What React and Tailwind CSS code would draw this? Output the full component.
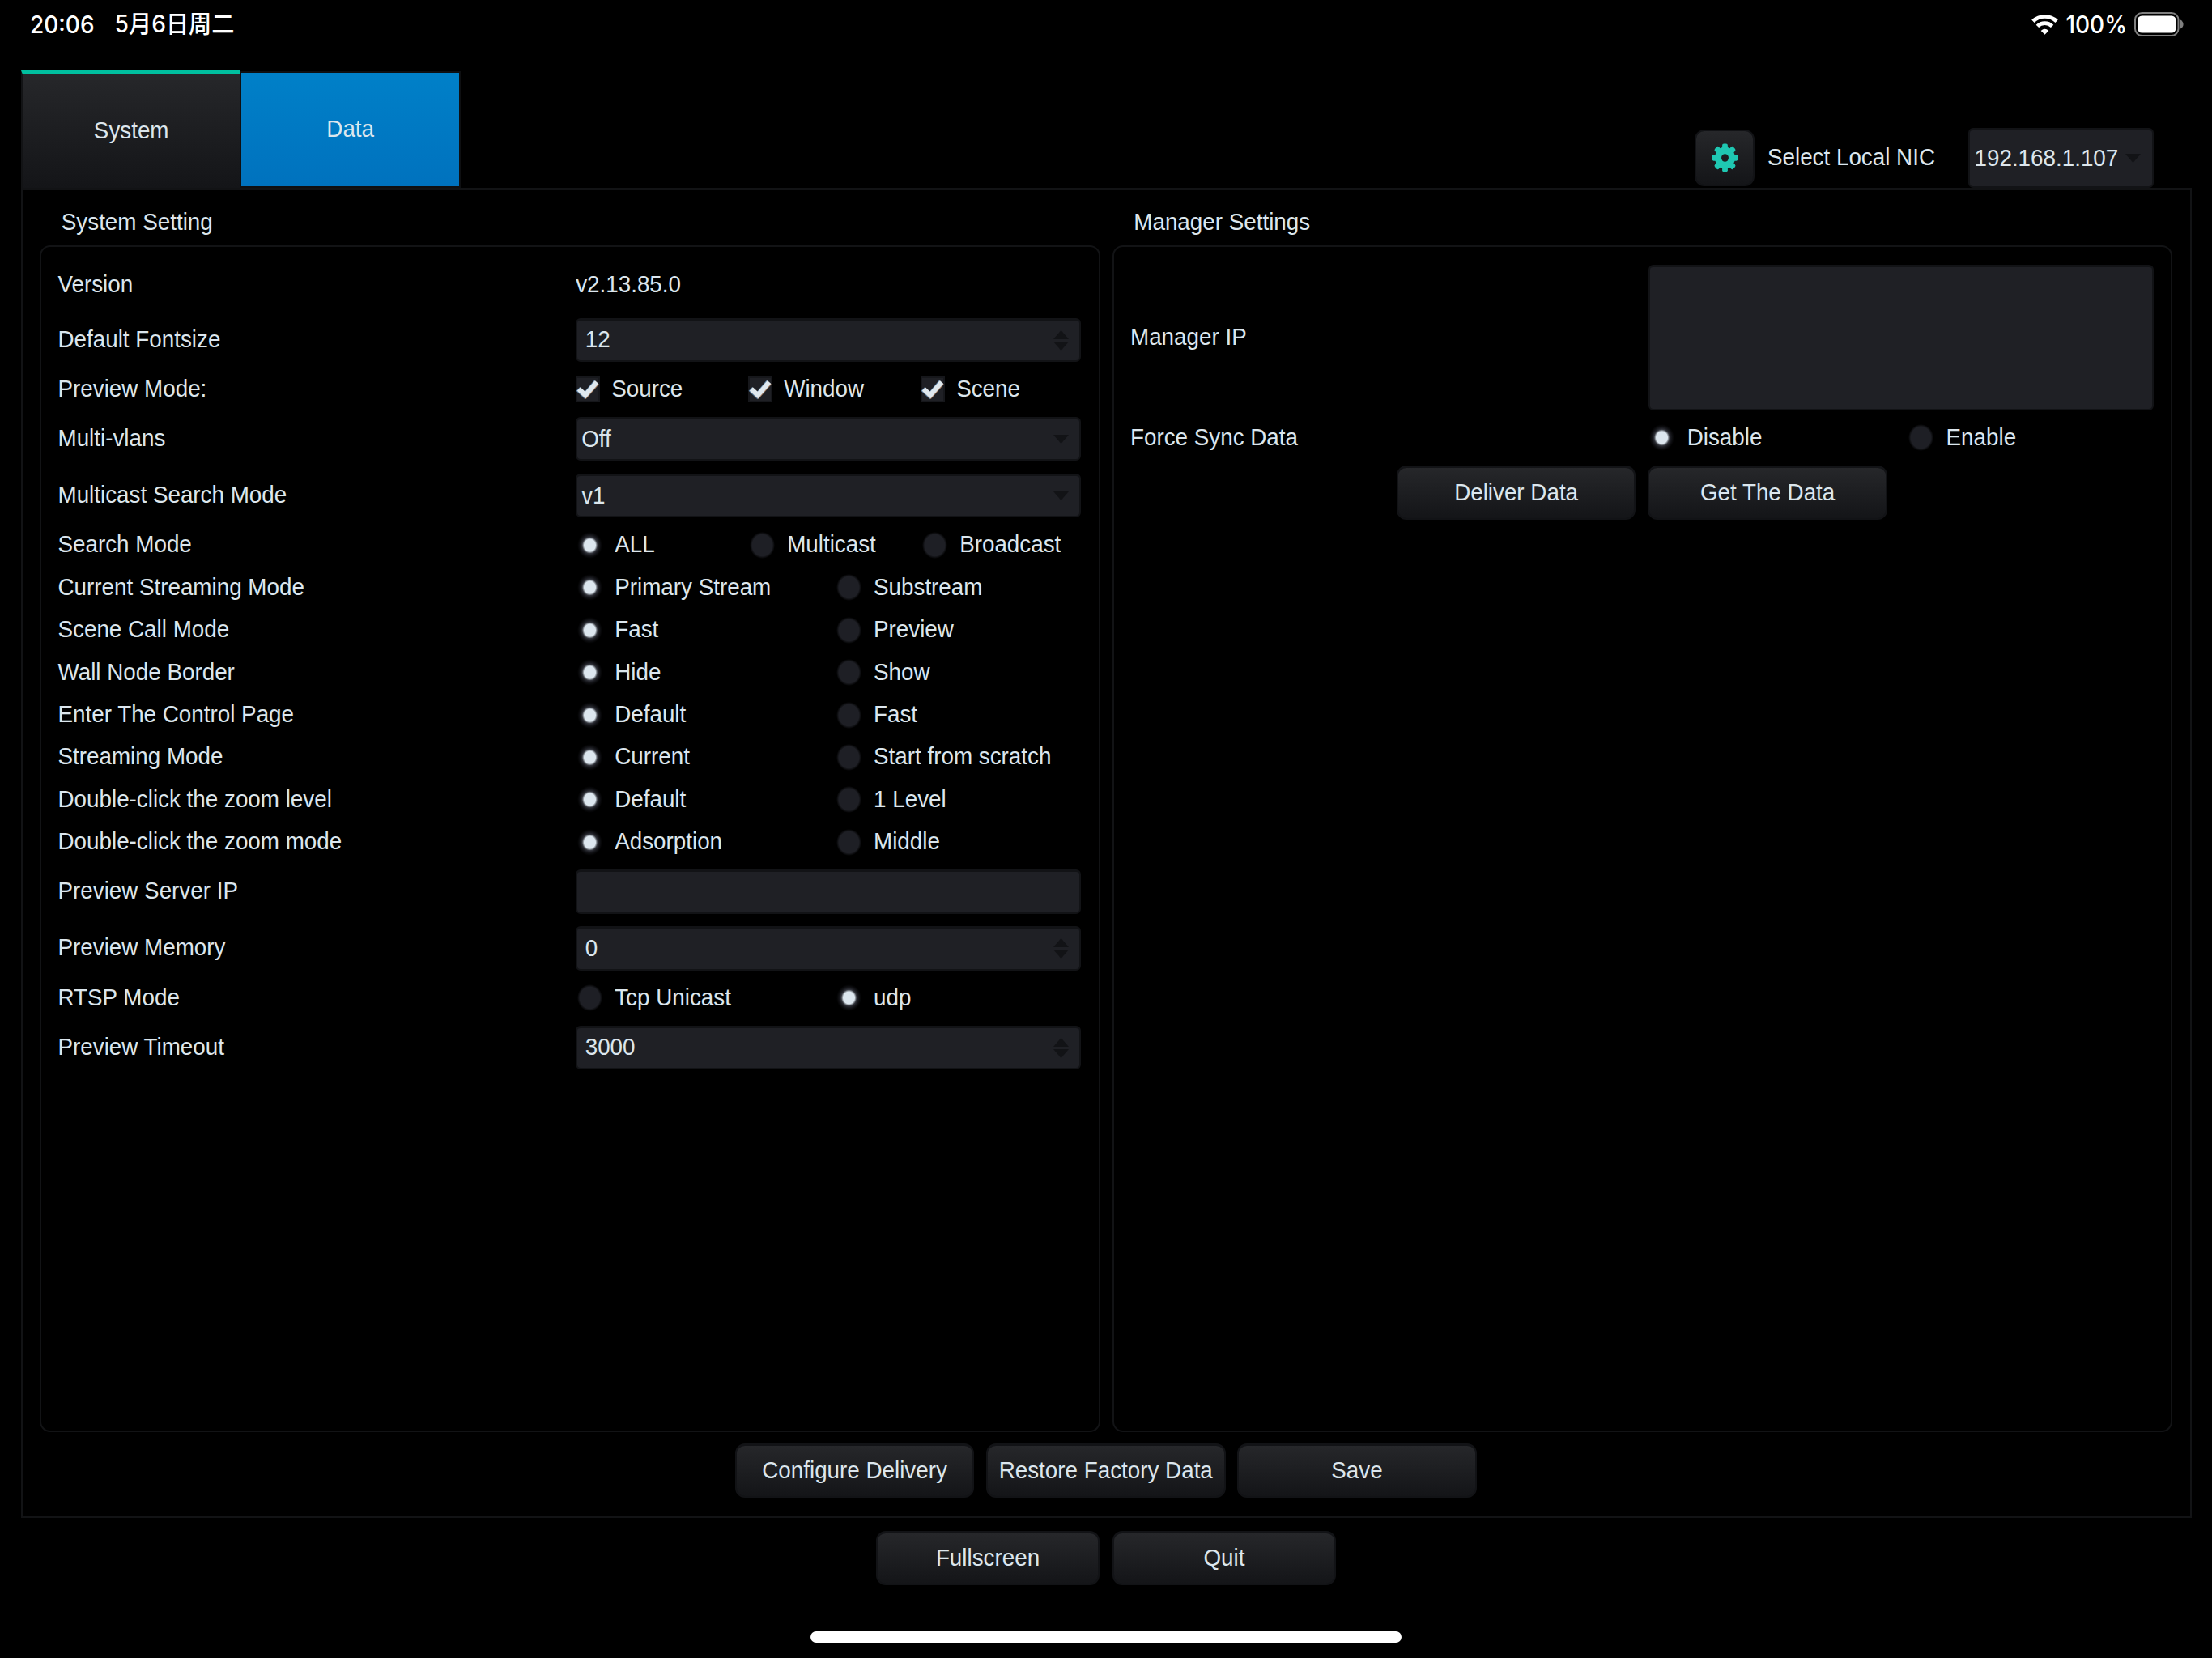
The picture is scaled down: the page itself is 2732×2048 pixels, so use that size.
import React, { useState } from 'react';

const radioRows = [
  { label: 'Search Mode', options: ['ALL', 'Multicast', 'Broadcast'] },
  { label: 'Current Streaming Mode', options: ['Primary Stream', 'Substream'] },
  { label: 'Scene Call Mode', options: ['Fast', 'Preview'] },
  { label: 'Wall Node Border', options: ['Hide', 'Show'] },
  { label: 'Enter The Control Page', options: ['Default', 'Fast'] },
  { label: 'Streaming Mode', options: ['Current', 'Start from scratch'] },
  { label: 'Double-click the zoom level', options: ['Default', '1 Level'] },
  { label: 'Double-click the zoom mode', options: ['Adsorption', 'Middle'] },
];

// All UI text is slightly condensed
function Text({ children, className = '' }) {
  return <span className={`inline-block scale-y-[1.08] -translate-y-[0.6px] whitespace-nowrap ${className}`}>{children}</span>;
}

function WifiIcon() {
  return (
    <svg width="33" height="26" viewBox="0 0 33 26" fill="none" stroke="#fff">
      <path d="M1.9 9.2A21 21 0 0 1 31.1 9.2" strokeWidth="4.8" />
      <path d="M7.4 15.4A13 13 0 0 1 25.6 15.4" strokeWidth="4.8" />
      <path d="M16.5 25.8L11.7 20.9Q16.5 16.4 21.3 20.9Z" fill="#fff" stroke="none" />
    </svg>
  );
}

function BatteryIcon() {
  return (
    <svg width="61" height="30" viewBox="0 0 61 30">
      <rect x="1" y="1" width="53.5" height="28" rx="8.5" fill="none" stroke="#7f7f7f" strokeWidth="2" />
      <rect x="4" y="4.5" width="47.5" height="21" rx="5.5" fill="#fff" />
      <path d="M57 9.5Q60.6 11.5 60.6 15Q60.6 18.5 57 20.5Z" fill="#7f7f7f" />
    </svg>
  );
}

function GearIcon() {
  return (
    <svg width="33" height="36" viewBox="-17 -17 34 34" preserveAspectRatio="none">
      <g fill="#1fc7b2">
        {[0, 45, 90, 135].map((a) => (
          <rect key={a} x="-3.5" y="-16.5" width="7" height="33" rx="2" transform={`rotate(${a})`} />
        ))}
        <circle r="12.8" />
      </g>
      <circle r="4.6" fill="#1b1d20" />
    </svg>
  );
}

function ArrowDown() {
  return (
    <svg width="19" height="11" viewBox="0 0 19 11">
      <path d="M0 0H19L9.5 11Z" fill="#121316" />
    </svg>
  );
}

function ArrowUpDown() {
  return (
    <svg width="19" height="25" viewBox="0 0 19 25">
      <path d="M0 11H19L9.5 0Z" fill="#121316" />
      <path d="M0 14H19L9.5 25Z" fill="#121316" />
    </svg>
  );
}

function Row({ label, children, height = 'h-[36.72px]' }) {
  return (
    <div className={`grid grid-cols-2 gap-x-[15.7px] items-center ${height}`}>
      <Text className="justify-self-start">{label}</Text>
      {children}
    </div>
  );
}

function Field({ value, spin, select }) {
  return (
    <div
      className={`flex items-center justify-between h-[54.3px] w-full rounded-[6px] border-2 border-t-[3px] border-[#121316] bg-[#1f2025] pr-[13.5px] ${select ? 'pl-[5px]' : 'pl-[9.5px]'}`}
    >
      <Text>{value}</Text>
      {spin && <ArrowUpDown />}
      {select && <ArrowDown />}
    </div>
  );
}

function Radio({ label, checked, onClick }) {
  return (
    <div className="flex items-center pl-[1.5px]" onClick={onClick}>
      <svg width="31" height="33" viewBox="0 0 31 33" className="shrink-0">
        <defs>
          <radialGradient id="radioOff">
            <stop offset="0.8" stopColor="#1e1f25" />
            <stop offset="1" stopColor="#1e1f25" stopOpacity="0" />
          </radialGradient>
          <radialGradient id="radioOn">
            <stop offset="0.45" stopColor="#dce6ee" />
            <stop offset="0.61" stopColor="#33353c" />
            <stop offset="0.7" stopColor="#1e1f25" />
            <stop offset="1" stopColor="#101115" stopOpacity="0" />
          </radialGradient>
        </defs>
        <ellipse cx="15.5" cy="16.5" rx="15.5" ry="16.5" fill={checked ? 'url(#radioOn)' : 'url(#radioOff)'} />
      </svg>
      <Text className="ml-[15.5px]">{label}</Text>
    </div>
  );
}

function RadioGroup({ options, initial = 0 }) {
  const [active, setActive] = useState(initial);
  return (
    <div className={`grid gap-x-[15.7px] ${options.length === 3 ? 'grid-cols-[197.3px_197.3px_197.3px]' : 'grid-cols-2'}`}>
      {options.map((opt, i) => (
        <Radio key={opt} label={opt} checked={i === active} onClick={() => setActive(i)} />
      ))}
    </div>
  );
}

function Checkbox({ label }) {
  return (
    <div className="flex items-center">
      <svg width="30" height="32" viewBox="0 0 30 32">
        <rect width="30" height="32" fill="#16171b" />
        <rect x="2" y="2" width="26" height="28" fill="#1f2025" />
        <path d="M2.8 15.5L11.2 23.6L25 7" fill="none" stroke="#5d83a8" strokeWidth="6.4" />
        <path d="M4.6 16L12.6 24L26.8 8" fill="none" stroke="#a98163" strokeWidth="5.4" />
        <path d="M3.8 15.5L12 23L26 7" fill="none" stroke="#dfe8ee" strokeWidth="5.8" />
      </svg>
      <Text className="ml-[14px]">{label}</Text>
    </div>
  );
}

function Button({ children, width = 'w-[295.5px]' }) {
  return (
    <button
      className={`h-[67.7px] shrink-0 rounded-[12px] border-2 border-t-[3px] border-[#121316] bg-[#1c1d20] bg-linear-to-b from-[#26272a] to-[#141518] ${width}`}
    >
      <Text>{children}</Text>
    </button>
  );
}

function Panel({ title, children }) {
  return (
    <div className="flex flex-col w-[1309.5px]">
      <div className="h-[67.5px] flex items-center pl-[26.8px] pt-[13px]">
        <Text>{title}</Text>
      </div>
      <div className="h-[1466px] rounded-[13px] border-2 border-[#121315] pl-[20.5px] pr-[21.3px] pt-[22.5px] flex flex-col gap-[15.7px]">
        {children}
      </div>
    </div>
  );
}

export default function App() {
  return (
    <div className="w-[2732px] h-[2048px] overflow-hidden bg-black text-[#dce6ed] text-[27.8px] leading-[32px] font-['Liberation_Sans',Arial,sans-serif] flex flex-col">
      {/* Status bar */}
      <div className="h-[60px] shrink-0 flex items-center justify-between pl-[37px] pr-[35px] text-white text-[28px] font-medium font-['Inter','Noto_Sans_CJK_SC',sans-serif]">
        <div className="flex gap-[25px]">
          <span className="inline-block scale-y-[1.05]">20:06</span>
          <span className="inline-block scale-y-[1.05] -translate-y-px text-[28.2px]">5月6日周二</span>
        </div>
        <div className="flex items-center">
          <WifiIcon />
          <span className="inline-block scale-y-[1.05] ml-[9px] mr-[9px]">100%</span>
          <BatteryIcon />
        </div>
      </div>

      {/* Tabs and NIC selector */}
      <div className="h-[172px] shrink-0 flex items-end justify-between pl-[26px] pr-[72.5px]">
        <div className="flex self-end">
          <div className="w-[270.4px] h-[145px] border-t-[5px] border-t-[#00bf9f] border-l-2 border-l-[#121315] bg-linear-to-b from-[#26272a] to-[#141518] flex items-center justify-center">
            <Text>System</Text>
          </div>
          <div className="w-[272.6px] h-[144px] mt-px border-2 border-[#0e0f11] bg-linear-to-b from-[#0080c8] to-[#0072be] bg-clip-padding flex items-center justify-center">
            <Text>Data</Text>
          </div>
        </div>
        <div className="flex items-center">
          <div className="w-[73.5px] h-[70px] rounded-[12px] border-2 border-[#121316] bg-[#1c1d20] bg-linear-to-b from-[#26272a] to-[#141518] flex items-center justify-center">
            <GearIcon />
          </div>
          <Text className="ml-[16px] mr-[41px]">Select Local NIC</Text>
          <div className="w-[228.5px] h-[74px] rounded-[6px] border-2 border-t-[3px] border-[#121316] bg-[#1f2025] flex items-center justify-between pl-[5.5px] pr-[13.5px]">
            <Text>192.168.1.107</Text>
            <ArrowDown />
          </div>
        </div>
      </div>

      {/* Main pane */}
      <div className="ml-[26px] w-[2680.5px] h-[1643.3px] shrink-0 border-2 border-t-[3px] border-[#121315] flex flex-col">
        <div className="flex justify-between pl-[21px] pr-[21.5px]">
          <Panel title="System Setting">
            <Row label="Version" height="h-[50px]">
              <Text className="justify-self-start">v2.13.85.0</Text>
            </Row>
            <Row label="Default Fontsize" height="h-[54.3px]">
              <Field value="12" spin />
            </Row>
            <Row label="Preview Mode:">
              <div className="grid gap-x-[15.7px] grid-cols-[197.3px_197.3px_197.3px]">
                <Checkbox label="Source" />
                <Checkbox label="Window" />
                <Checkbox label="Scene" />
              </div>
            </Row>
            <Row label="Multi-vlans" height="h-[54.3px]">
              <Field value="Off" select />
            </Row>
            <Row label="Multicast Search Mode" height="h-[54.3px]">
              <Field value="v1" select />
            </Row>
            {radioRows.map((row) => (
              <Row key={row.label} label={row.label}>
                <RadioGroup options={row.options} />
              </Row>
            ))}
            <Row label="Preview Server IP" height="h-[54.3px]">
              <Field value="" />
            </Row>
            <Row label="Preview Memory" height="h-[54.3px]">
              <Field value="0" spin />
            </Row>
            <Row label="RTSP Mode">
              <RadioGroup options={['Tcp Unicast', 'udp']} initial={1} />
            </Row>
            <Row label="Preview Timeout" height="h-[54.3px]">
              <Field value="3000" spin />
            </Row>
          </Panel>

          <Panel title="Manager Settings">
            <Row label="Manager IP" height="h-[179.6px]">
              <div className="h-[179.6px] rounded-[6px] border-2 border-t-[3px] border-[#121316] bg-[#1f2025]"></div>
            </Row>
            <Row label="Force Sync Data">
              <RadioGroup options={['Disable', 'Enable']} />
            </Row>
            <div className="flex justify-center gap-[15px]">
              <Button>Deliver Data</Button>
              <Button>Get The Data</Button>
            </div>
          </Panel>
        </div>

        <div className="flex justify-center gap-[14.7px] mt-[14px] pr-px">
          <Button>Configure Delivery</Button>
          <Button>Restore Factory Data</Button>
          <Button>Save</Button>
        </div>
      </div>

      {/* Footer */}
      <div className="flex justify-center gap-[15.5px] mt-[15.5px]">
        <Button width="w-[276.5px]">Fullscreen</Button>
        <Button width="w-[276.5px]">Quit</Button>
      </div>
      <div className="w-[729.5px] h-[14px] rounded-full bg-white mx-auto mt-[57px]"></div>
    </div>
  );
}
